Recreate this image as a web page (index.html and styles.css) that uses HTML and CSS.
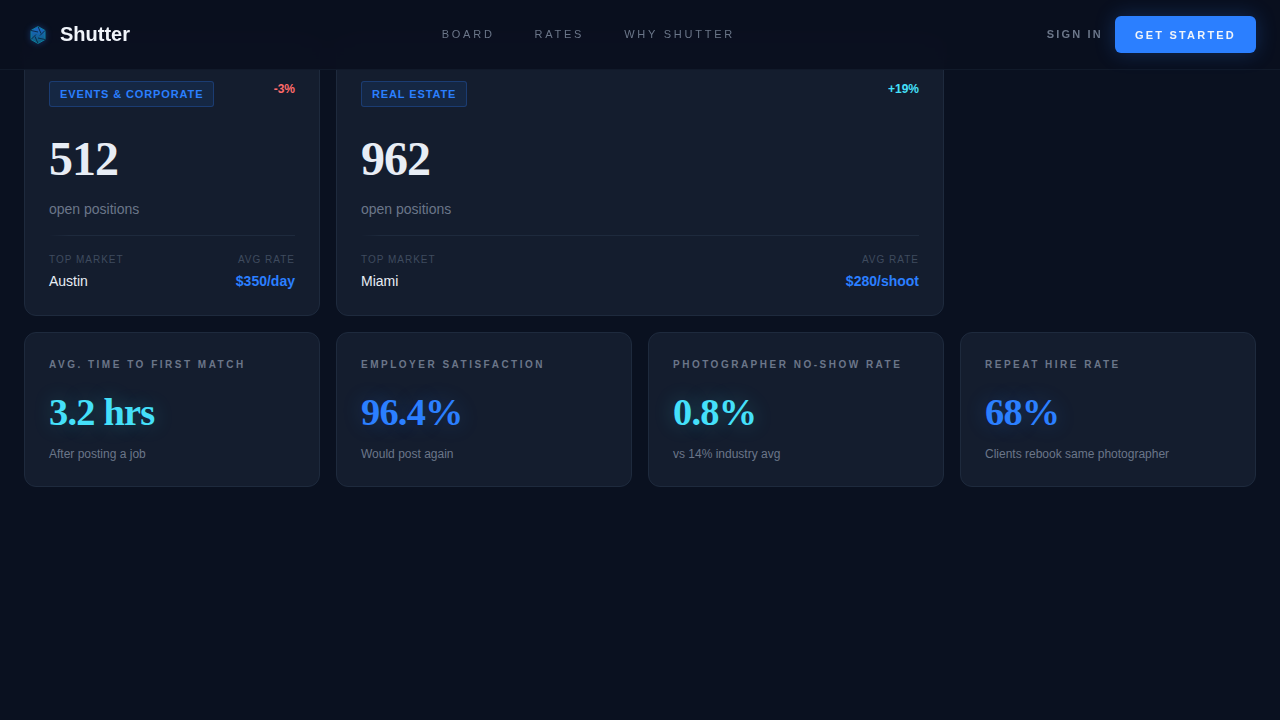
FILE: index.html
```html
<!DOCTYPE html>
<html>
    <head>
        <meta charset="utf-8">
        <title>Shutter</title>
        <link rel="stylesheet" href="styles.css">
    </head>
    <body>
        <nav class="nav">
            <div class="brand">
                <svg class="brand-icon" width="20" height="20" viewBox="0 0 20 20">
                    <defs>
                        <linearGradient id="hexFill" x1="0" y1="0" x2="0" y2="1">
                            <stop offset="0" stop-color="#1f66cc"/>
                            <stop offset="1" stop-color="#0b5f7a"/>
                        </linearGradient>
                    </defs>
                    <polygon points="10,1.500 17,5.500 17,14.500 10,18.500 3,14.500 3,5.500" fill="url(#hexFill)" stroke="#0e7f9c" stroke-width="1"/>
                    <path d="M10 1.500l3 7M17 5.500l-5 5M17 14.500l-7-1.500M10 18.500l-3-7M3 14.500l5-5M3 5.500l7 1.500" stroke="#0a2c4a" stroke-width="1" fill="none"/>
                </svg>
                <span class="brand-name">Shutter</span>
            </div>
            <div class="nav-links">
                <a>BOARD</a>
                <a>RATES</a>
                <a>WHY SHUTTER</a>
            </div>
            <div class="nav-actions">
                <a class="sign-in">SIGN IN</a>
                <button class="cta">GET STARTED</button>
            </div>
        </nav>

        <main class="grid">
            <div class="card market">
                <div class="market-top">
                    <span class="tag">EVENTS &amp; CORPORATE</span>
                    <span class="trend down">-3%</span>
                </div>
                <div class="market-num">512</div>
                <div class="market-sub">open positions</div>
                <div class="market-foot">
                    <div>
                        <div class="foot-label">TOP MARKET</div>
                        <div class="foot-val">Austin</div>
                    </div>
                    <div class="right">
                        <div class="foot-label">AVG RATE</div>
                        <div class="foot-rate">$350/day</div>
                    </div>
                </div>
            </div>
            <div class="card market wide">
                <div class="market-top">
                    <span class="tag">REAL ESTATE</span>
                    <span class="trend up">+19%</span>
                </div>
                <div class="market-num">962</div>
                <div class="market-sub">open positions</div>
                <div class="market-foot">
                    <div>
                        <div class="foot-label">TOP MARKET</div>
                        <div class="foot-val">Miami</div>
                    </div>
                    <div class="right">
                        <div class="foot-label">AVG RATE</div>
                        <div class="foot-rate">$280/shoot</div>
                    </div>
                </div>
            </div>
            <div class="spacer"></div>

            <div class="card stat">
                <div class="stat-label">AVG. TIME TO FIRST MATCH</div>
                <div class="stat-num cyan">3.2 hrs</div>
                <div class="stat-sub">After posting a job</div>
            </div>
            <div class="card stat">
                <div class="stat-label">EMPLOYER SATISFACTION</div>
                <div class="stat-num blue">96.4%</div>
                <div class="stat-sub">Would post again</div>
            </div>
            <div class="card stat">
                <div class="stat-label">PHOTOGRAPHER NO-SHOW RATE</div>
                <div class="stat-num cyan">0.8%</div>
                <div class="stat-sub">vs 14% industry avg</div>
            </div>
            <div class="card stat">
                <div class="stat-label">REPEAT HIRE RATE</div>
                <div class="stat-num blue">68%</div>
                <div class="stat-sub">Clients rebook same photographer</div>
            </div>
        </main>
    </body>
</html>
```

FILE: styles.css
```css
* {
    box-sizing: border-box;
}

html, body {
    height: 100%;
}

body {
    margin: 0;
    background: #0a1120;
    font-family: "Liberation Sans", Arial, sans-serif;
    color: #e8edf5;
    overflow: hidden;
}

.nav {
    position: fixed;
    top: 0;
    left: 0;
    right: 0;
    height: 70px;
    z-index: 10;
    display: flex;
    align-items: center;
    justify-content: space-between;
    padding: 0 24px;
    background: rgba(10, 15, 30, 0.92);
    backdrop-filter: blur(12px);
    border-bottom: 1px solid #111a2a;
}

.brand {
    display: flex;
    align-items: center;
    gap: 12px;
}

.brand-icon {
    margin-left: 4px;
    filter: drop-shadow(0 0 3px rgba(43, 127, 255, 0.35));
}

.brand-name {
    font-size: 20px;
    font-weight: 700;
    color: #f0f4fa;
}

.nav-links {
    display: flex;
    gap: 40px;
    margin-bottom: 1px;
}

.nav-links a {
    font-size: 11px;
    line-height: 12px;
    letter-spacing: 2.75px;
    color: #6b7689;
}

.nav-actions {
    display: flex;
    align-items: center;
    gap: 12px;
}

.sign-in {
    font-size: 11px;
    line-height: 12px;
    margin-bottom: 1px;
    font-weight: 700;
    letter-spacing: 2.2px;
    color: #6b7689;
}

.cta {
    height: 37px;
    width: 141px;
    border: none;
    border-radius: 6px;
    background: #2b7fff;
    color: #f0f4fa;
    font-family: inherit;
    font-size: 11px;
    font-weight: 700;
    letter-spacing: 2.2px;
    box-shadow: 0 0 20px rgba(43, 127, 255, 0.25);
}

.grid {
    display: grid;
    grid-template-columns: repeat(4, 296px);
    gap: 16px;
    padding: 40px 24px 0;
}

.card {
    background: #141d2e;
    border: 1px solid #1e2a3d;
    border-radius: 12px;
}

.market {
    height: 276px;
    padding: 40px 24px 0;
}

.wide {
    grid-column: span 2;
}

.market-top {
    display: flex;
    justify-content: space-between;
    align-items: flex-start;
    height: 26px;
}

.tag {
    height: 26px;
    padding: 0 10px;
    display: flex;
    align-items: center;
    font-size: 11px;
    font-weight: 700;
    letter-spacing: 0.88px;
    color: #2b7fff;
    background: rgba(43, 127, 255, 0.1);
    border: 1px solid rgba(43, 127, 255, 0.25);
    border-radius: 3px;
}

.trend {
    font-size: 12px;
    font-weight: 700;
    margin-top: 1px;
}

.down {
    color: #ff6b6b;
}

.up {
    color: #45e0fa;
}

.market-num {
    margin-top: 24px;
    font-family: "Liberation Serif", "Times New Roman", serif;
    font-size: 48px;
    font-weight: 700;
    line-height: 56px;
    letter-spacing: -0.96px;
    color: #e8edf5;
}

.market-sub {
    margin-top: 12px;
    font-size: 14px;
    line-height: 20px;
    color: #6b7689;
}

.market-foot {
    display: flex;
    justify-content: space-between;
    margin-top: 16px;
    padding-top: 19px;
    background: linear-gradient(to right, transparent, #1e2a3d 20px) top / 100% 1px no-repeat;
}

.right {
    text-align: right;
}

.foot-label {
    font-size: 10px;
    line-height: 12px;
    letter-spacing: 1px;
    color: #3f4b5e;
}

.foot-val, .foot-rate {
    margin-top: 6px;
    font-size: 14px;
    line-height: 18px;
}

.foot-val {
    color: #e8edf5;
}

.foot-rate {
    font-weight: 700;
    color: #2b7fff;
}

.stat {
    height: 155px;
    padding: 25px 24px 0;
}

.stat-label {
    font-size: 10px;
    font-weight: 700;
    line-height: 14px;
    letter-spacing: 2.5px;
    color: #6b7689;
}

.stat-num {
    margin-top: 18px;
    font-family: "Liberation Serif", "Times New Roman", serif;
    font-size: 38.4px;
    font-weight: 700;
    line-height: 44px;
    letter-spacing: -0.768px;
}

.cyan {
    color: #45e0fa;
    text-shadow: 0 0 20px rgba(61, 232, 255, 0.25);
}

.blue {
    color: #2b7fff;
    text-shadow: 0 0 20px rgba(43, 127, 255, 0.25);
}

.stat-sub {
    margin-top: 11px;
    font-size: 12px;
    line-height: 18px;
    color: #6b7689;
}
```
